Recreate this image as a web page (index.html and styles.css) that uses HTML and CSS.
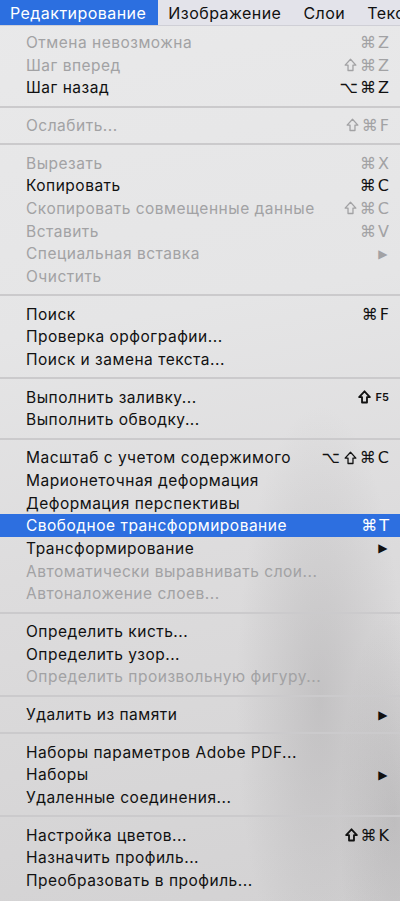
FILE: index.html
```html
<!DOCTYPE html>
<html lang="ru">
<head>
<meta charset="utf-8">
<link rel="stylesheet" href="styles.css">
</head>
<body>
<div class="screen">
  <div class="menubar">
    <span class="mb-item active">Редактирование</span>
    <span class="mb-item">Изображение</span>
    <span class="mb-item">Слои</span>
    <span class="mb-item">Текст</span>
  </div>
  <div class="menu">
    <div class="item off"><span class="label">Отмена невозможна</span><span class="key">⌘Z</span></div>
    <div class="item off"><span class="label">Шаг вперед</span><span class="key"><svg class="shift" viewBox="0 0 12 13"><path d="M6 1.2 L11 6.6 H8.3 V11.6 H3.7 V6.6 H1 Z"/></svg>⌘Z</span></div>
    <div class="item"><span class="label">Шаг назад</span><span class="key">⌥⌘Z</span></div>
    <div class="sep"></div>
    <div class="item off"><span class="label">Ослабить...</span><span class="key"><svg class="shift" viewBox="0 0 12 13"><path d="M6 1.2 L11 6.6 H8.3 V11.6 H3.7 V6.6 H1 Z"/></svg>⌘F</span></div>
    <div class="sep"></div>
    <div class="item off"><span class="label">Вырезать</span><span class="key">⌘X</span></div>
    <div class="item"><span class="label">Копировать</span><span class="key">⌘C</span></div>
    <div class="item off"><span class="label">Скопировать совмещенные данные</span><span class="key"><svg class="shift" viewBox="0 0 12 13"><path d="M6 1.2 L11 6.6 H8.3 V11.6 H3.7 V6.6 H1 Z"/></svg>⌘C</span></div>
    <div class="item off"><span class="label">Вставить</span><span class="key">⌘V</span></div>
    <div class="item off"><span class="label">Специальная вставка</span><span class="arrow">▶</span></div>
    <div class="item off"><span class="label">Очистить</span></div>
    <div class="sep"></div>
    <div class="item"><span class="label">Поиск</span><span class="key">⌘F</span></div>
    <div class="item"><span class="label">Проверка орфографии...</span></div>
    <div class="item"><span class="label">Поиск и замена текста...</span></div>
    <div class="sep"></div>
    <div class="item"><span class="label">Выполнить заливку...</span><span class="key"><svg class="shift bold" viewBox="0 0 12 13"><path d="M6 1.2 L11 6.6 H8.3 V11.6 H3.7 V6.6 H1 Z"/></svg><small>F5</small></span></div>
    <div class="item"><span class="label">Выполнить обводку...</span></div>
    <div class="sep"></div>
    <div class="item"><span class="label">Масштаб с учетом содержимого</span><span class="key">⌥<svg class="shift" viewBox="0 0 12 13"><path d="M6 1.2 L11 6.6 H8.3 V11.6 H3.7 V6.6 H1 Z"/></svg>⌘C</span></div>
    <div class="item"><span class="label">Марионеточная деформация</span></div>
    <div class="item"><span class="label">Деформация перспективы</span></div>
    <div class="item sel"><span class="label">Свободное трансформирование</span><span class="key">⌘T</span></div>
    <div class="item"><span class="label">Трансформирование</span><span class="arrow">▶</span></div>
    <div class="item off"><span class="label">Автоматически выравнивать слои...</span></div>
    <div class="item off"><span class="label">Автоналожение слоев...</span></div>
    <div class="sep"></div>
    <div class="item"><span class="label">Определить кисть...</span></div>
    <div class="item"><span class="label">Определить узор...</span></div>
    <div class="item off"><span class="label">Определить произвольную фигуру...</span></div>
    <div class="sep"></div>
    <div class="item"><span class="label">Удалить из памяти</span><span class="arrow">▶</span></div>
    <div class="sep"></div>
    <div class="item"><span class="label">Наборы параметров Adobe PDF...</span></div>
    <div class="item"><span class="label">Наборы</span><span class="arrow">▶</span></div>
    <div class="item"><span class="label">Удаленные соединения...</span></div>
    <div class="sep"></div>
    <div class="item"><span class="label">Настройка цветов...</span><span class="key"><svg class="shift bold" viewBox="0 0 12 13"><path d="M6 1.2 L11 6.6 H8.3 V11.6 H3.7 V6.6 H1 Z"/></svg>⌘K</span></div>
    <div class="item"><span class="label">Назначить профиль...</span></div>
    <div class="item"><span class="label">Преобразовать в профиль...</span></div>
  </div>
</div>
</body>
</html>
```

FILE: styles.css
```css
html, body {
  margin: 0;
  padding: 0;
}
body {
  width: 400px;
  height: 901px;
  overflow: hidden;
  font-family: "Inter", "Noto Sans", "DejaVu Sans", sans-serif;
  font-size: 15.5px;
  letter-spacing: 0.5px;
  color: #111;
}
.screen {
  width: 400px;
  height: 901px;
  overflow: hidden;
  background:
    radial-gradient(ellipse 120px 420px at 320px 700px, rgba(150,148,150,0.32), rgba(150,148,150,0) 70%),
    radial-gradient(ellipse 80px 300px at 395px 820px, rgba(140,138,140,0.3), rgba(140,138,140,0) 70%),
    linear-gradient(170deg, #e9e9ea 0%, #e5e5e6 35%, #dddcdd 60%, #d3d2d3 100%);
}
.menubar {
  height: 26px;
  display: flex;
  align-items: center;
  background: #e3e3ea;
  border-bottom: 1px solid #cfcfd6;
  box-sizing: border-box;
  white-space: nowrap;
  overflow: hidden;
  font-size: 16px;
  letter-spacing: 0.45px;
}
.mb-item {
  flex: none;
  height: 26px;
  line-height: 26px;
  padding: 0 12px 0 10px;
  color: #111;
}
.mb-item.active {
  background: #2c6fe0;
  color: #fff;
}
.menu {
  padding-top: 5px;
}
.item {
  height: 22.7px;
  display: flex;
  align-items: center;
  padding: 0 11px 0 26px;
  white-space: nowrap;
}
.item .label {
  flex: 1;
}
.item.off {
  color: #a2a2a4;
}
.item.sel {
  background: #2d6fe0;
  color: #fff;
}
.key {
  display: flex;
  align-items: center;
  gap: 2px;
  font-family: "DejaVu Sans", "Inter", sans-serif;
  font-size: 16px;
  letter-spacing: 2px;
  margin-right: -2px;
}
.shift {
  width: 13px;
  height: 14px;
  margin-right: 1px;
  fill: none;
  stroke: currentColor;
  stroke-width: 1.2;
  stroke-linejoin: round;
}
.shift.bold {
  stroke-width: 1.7;
}
.key small {
  font-family: "Inter", sans-serif;
  font-size: 11px;
  font-weight: 600;
  letter-spacing: 0;
  margin-left: 2px;
  margin-right: 2px;
}
.arrow {
  font-family: "DejaVu Sans", sans-serif;
  font-size: 12px;
  padding-right: 1px;
}
.sep {
  height: 2px;
  margin: 6.5px 0;
  background: #cbcacc;
}
```
